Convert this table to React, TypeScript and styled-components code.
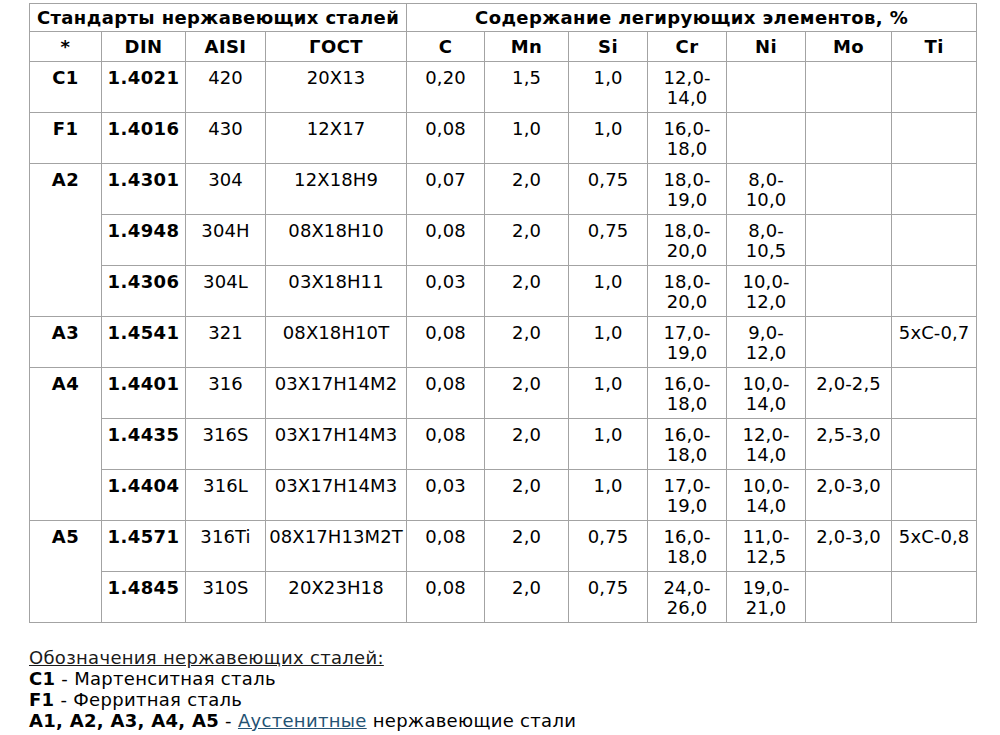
import React from "react";
import styled, { createGlobalStyle } from "styled-components";

const GlobalStyle = createGlobalStyle`
  body {
    margin: 0;
    background: #ffffff;
    color: #000000;
    font-family: "DejaVu Sans", Verdana, sans-serif;
  }
`;

const Page = styled.div`
  padding: 3px 0 0 29px;
`;

const Table = styled.table`
  border-collapse: collapse;
  table-layout: fixed;
  width: 947px;
  font-size: 18px;
  line-height: 20px;
`;

const HeadCell = styled.th<{ $h: number }>`
  height: ${(p) => p.$h}px;
  padding: 0;
  border: 1px solid #a3a3a3;
  font-weight: bold;
  text-align: center;
  vertical-align: middle;
  white-space: nowrap;
  letter-spacing: 0.4px;
  box-sizing: border-box;
`;

const Cell = styled.td<{ $bold?: boolean }>`
  height: 51px;
  padding: 6px 0 0 0;
  border: 1px solid #a3a3a3;
  text-align: center;
  vertical-align: top;
  white-space: pre;
  font-weight: ${(p) => (p.$bold ? "bold" : "normal")};
  letter-spacing: ${(p) => (p.$bold ? "0.4px" : "0.1px")};
  box-sizing: border-box;
`;

const Legend = styled.div`
  margin-top: 24px;
  font-size: 18px;
  line-height: 21px;
  letter-spacing: 0.3px;
`;

const LegendTitle = styled.div`
  text-decoration: underline;
  color: #1a1a1a;
`;

const Mark = styled.b`
  font-weight: bold;
`;

const Link = styled.a`
  color: #245273;
  text-decoration: underline;
`;

const widths = [72, 84, 80, 141, 78, 84, 79, 79, 79, 86, 85];

type Row = { mark?: string; span?: number; cells: string[] };

const rows: Row[] = [
  { mark: "C1", cells: ["1.4021", "420", "20Х13", "0,20", "1,5", "1,0", "12,0-\n14,0", "", "", ""] },
  { mark: "F1", cells: ["1.4016", "430", "12Х17", "0,08", "1,0", "1,0", "16,0-\n18,0", "", "", ""] },
  { mark: "A2", span: 3, cells: ["1.4301", "304", "12Х18Н9", "0,07", "2,0", "0,75", "18,0-\n19,0", "8,0-\n10,0", "", ""] },
  { cells: ["1.4948", "304H", "08Х18Н10", "0,08", "2,0", "0,75", "18,0-\n20,0", "8,0-\n10,5", "", ""] },
  { cells: ["1.4306", "304L", "03Х18Н11", "0,03", "2,0", "1,0", "18,0-\n20,0", "10,0-\n12,0", "", ""] },
  { mark: "A3", cells: ["1.4541", "321", "08Х18Н10Т", "0,08", "2,0", "1,0", "17,0-\n19,0", "9,0-\n12,0", "", "5xC-0,7"] },
  { mark: "A4", span: 3, cells: ["1.4401", "316", "03Х17Н14М2", "0,08", "2,0", "1,0", "16,0-\n18,0", "10,0-\n14,0", "2,0-2,5", ""] },
  { cells: ["1.4435", "316S", "03Х17Н14М3", "0,08", "2,0", "1,0", "16,0-\n18,0", "12,0-\n14,0", "2,5-3,0", ""] },
  { cells: ["1.4404", "316L", "03Х17Н14М3", "0,03", "2,0", "1,0", "17,0-\n19,0", "10,0-\n14,0", "2,0-3,0", ""] },
  { mark: "A5", span: 2, cells: ["1.4571", "316Ti", "08Х17Н13М2Т", "0,08", "2,0", "0,75", "16,0-\n18,0", "11,0-\n12,5", "2,0-3,0", "5xC-0,8"] },
  { cells: ["1.4845", "310S", "20Х23Н18", "0,08", "2,0", "0,75", "24,0-\n26,0", "19,0-\n21,0", "", ""] },
];

const columns = ["*", "DIN", "AISI", "ГОСТ", "C", "Mn", "Si", "Cr", "Ni", "Mo", "Ti"];

export default function App() {
  return (
    <Page>
      <GlobalStyle />
      <Table>
        <colgroup>
          {widths.map((w, i) => (
            <col key={i} style={{ width: w }} />
          ))}
        </colgroup>
        <thead>
          <tr>
            <HeadCell $h={28} colSpan={4}>Стандарты нержавеющих сталей</HeadCell>
            <HeadCell $h={28} colSpan={7}>Содержание легирующих элементов, %</HeadCell>
          </tr>
          <tr>
            {columns.map((c) => (
              <HeadCell $h={30} key={c}>{c}</HeadCell>
            ))}
          </tr>
        </thead>
        <tbody>
          {rows.map((r, i) => (
            <tr key={i}>
              {r.mark && (
                <Cell $bold rowSpan={r.span}>
                  {r.mark}
                </Cell>
              )}
              {r.cells.map((c, j) => (
                <Cell key={j} $bold={j === 0}>
                  {c}
                </Cell>
              ))}
            </tr>
          ))}
        </tbody>
      </Table>
      <Legend>
        <LegendTitle>Обозначения нержавеющих сталей:</LegendTitle>
        <div>
          <Mark>C1</Mark> - Мартенситная сталь
        </div>
        <div>
          <Mark>F1</Mark> - Ферритная сталь
        </div>
        <div>
          <Mark>A1, A2, A3, A4, A5</Mark> - <Link href="#">Аустенитные</Link> нержавеющие стали
        </div>
      </Legend>
    </Page>
  );
}
